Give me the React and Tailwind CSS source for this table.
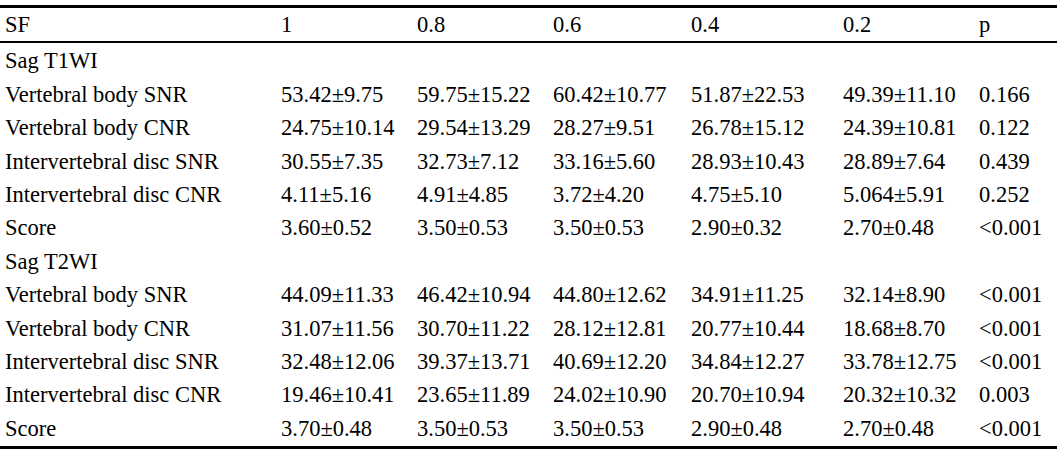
const header = ["SF", "1", "0.8", "0.6", "0.4", "0.2", "p"];

const groups = [
  {
    title: "Sag T1WI",
    rows: [
      ["Vertebral body SNR", "53.42±9.75", "59.75±15.22", "60.42±10.77", "51.87±22.53", "49.39±11.10", "0.166"],
      ["Vertebral body CNR", "24.75±10.14", "29.54±13.29", "28.27±9.51", "26.78±15.12", "24.39±10.81", "0.122"],
      ["Intervertebral disc SNR", "30.55±7.35", "32.73±7.12", "33.16±5.60", "28.93±10.43", "28.89±7.64", "0.439"],
      ["Intervertebral disc CNR", "4.11±5.16", "4.91±4.85", "3.72±4.20", "4.75±5.10", "5.064±5.91", "0.252"],
      ["Score", "3.60±0.52", "3.50±0.53", "3.50±0.53", "2.90±0.32", "2.70±0.48", "<0.001"],
    ],
  },
  {
    title: "Sag T2WI",
    rows: [
      ["Vertebral body SNR", "44.09±11.33", "46.42±10.94", "44.80±12.62", "34.91±11.25", "32.14±8.90", "<0.001"],
      ["Vertebral body CNR", "31.07±11.56", "30.70±11.22", "28.12±12.81", "20.77±10.44", "18.68±8.70", "<0.001"],
      ["Intervertebral disc SNR", "32.48±12.06", "39.37±13.71", "40.69±12.20", "34.84±12.27", "33.78±12.75", "<0.001"],
      ["Intervertebral disc CNR", "19.46±10.41", "23.65±11.89", "24.02±10.90", "20.70±10.94", "20.32±10.32", "0.003"],
      ["Score", "3.70±0.48", "3.50±0.53", "3.50±0.53", "2.90±0.48", "2.70±0.48", "<0.001"],
    ],
  },
];

const cols = "grid grid-cols-[276px_136px_136px_138px_152px_136px_1fr]";

function Row({ cells }) {
  return (
    <div className={`${cols} h-[33.4px]`}>
      {cells.map((c, i) => (
        <div key={i} className="pl-[5px] flex items-center whitespace-nowrap">
          {c}
        </div>
      ))}
    </div>
  );
}

export default function App() {
  return (
    <div className="w-[1057px] h-[458px] bg-white text-black font-['Liberation_Serif','Times_New_Roman',serif] text-[22.5px] leading-none pt-[5px]">
      {/* header */}
      <div className="border-t-[3px] border-b-2 border-black">
        <div className={`${cols} h-[33px]`}>
          {header.map((h, i) => (
            <div key={i} className="pl-[5px] flex items-center pt-[2px]">
              {h}
            </div>
          ))}
        </div>
      </div>

      {/* body */}
      <div className="pt-[2px] border-b-[3px] border-black">
        {groups.map((g) => (
          <div key={g.title}>
            <div className="h-[33.4px] flex items-center pl-[5px]">{g.title}</div>
            {g.rows.map((r, i) => (
              <Row key={i} cells={r} />
            ))}
          </div>
        ))}
      </div>
    </div>
  );
}
